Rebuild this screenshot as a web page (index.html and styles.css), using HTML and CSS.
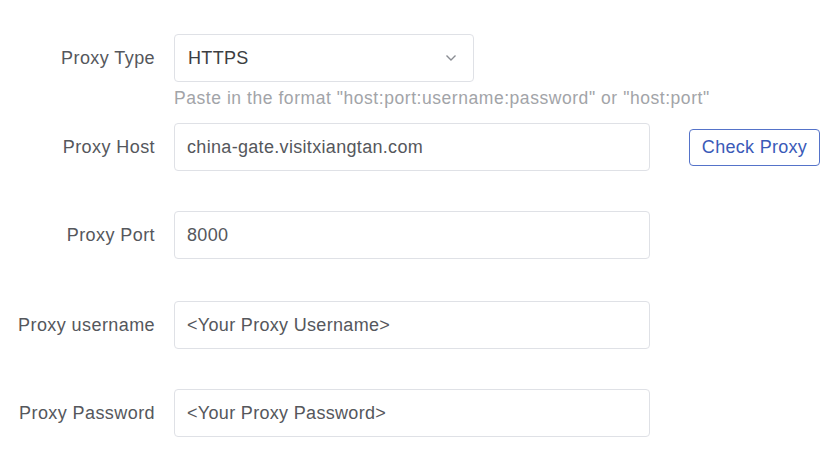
FILE: index.html
```html
<!DOCTYPE html>
<html>
<head>
<meta charset="utf-8">
<link rel="stylesheet" href="styles.css">
</head>
<body>
<form class="form">
  <div class="row">
    <label class="label">Proxy Type</label>
    <div class="control">
      <div class="select">
        <span class="value">HTTPS</span>
        <svg class="chevron" width="12" height="8" viewBox="0 0 12 8"><path d="M1.5 1.5 L6 6 L10.5 1.5" fill="none" stroke="#8a8d93" stroke-width="1.4"/></svg>
      </div>
      <div class="hint">Paste in the format "host:port:username:password" or "host:port"</div>
    </div>
  </div>
  <div class="row">
    <label class="label">Proxy Host</label>
    <div class="control inline">
      <div class="input wide">china-gate.visitxiangtan.com</div>
      <button type="button" class="btn">Check Proxy</button>
    </div>
  </div>
  <div class="row row-loose">
    <label class="label">Proxy Port</label>
    <div class="control"><div class="input wide">8000</div></div>
  </div>
  <div class="row">
    <label class="label">Proxy username</label>
    <div class="control"><div class="input wide">&lt;Your Proxy Username&gt;</div></div>
  </div>
  <div class="row">
    <label class="label">Proxy Password</label>
    <div class="control"><div class="input wide">&lt;Your Proxy Password&gt;</div></div>
  </div>
</form>
</body>
</html>
```
FILE: styles.css
```css
html, body {
  margin: 0;
  padding: 0;
  background: #ffffff;
  font-family: "Liberation Sans", Arial, sans-serif;
}
.form {
  padding-top: 34px;
  display: flex;
  flex-direction: column;
}
.row {
  display: flex;
  align-items: flex-start;
  margin-bottom: 40px;
}
.row:first-child {
  margin-bottom: 0;
}
.row.row-loose {
  margin-bottom: 42px;
}
.label {
  width: 155px;
  flex: none;
  text-align: right;
  font-size: 18px;
  letter-spacing: 0.42px;
  line-height: 48px;
  height: 48px;
  color: #55575c;
  margin-right: 19px;
  white-space: nowrap;
}
.control {
  display: flex;
  flex-direction: column;
}
.control.inline {
  flex-direction: row;
  align-items: center;
}
.select, .input {
  box-sizing: border-box;
  height: 48px;
  border: 1px solid #dfe1e6;
  border-radius: 4px;
  padding: 0 12px;
  font-size: 18px;
  letter-spacing: 0.32px;
  line-height: 46px;
  color: #55575c;
  background: #fff;
}
.select {
  width: 300px;
  display: flex;
  align-items: center;
  justify-content: space-between;
  padding-left: 13px;
  padding-right: 16px;
  color: #3c3e42;
}
.chevron {
  display: block;
}
.hint {
  height: 41px;
  box-sizing: border-box;
  padding-top: 4px;
  line-height: 24px;
  font-size: 17.5px;
  letter-spacing: 0.55px;
  color: #a2a4a8;
  white-space: nowrap;
}
.input.wide {
  width: 476px;
}
.btn {
  margin-left: 39px;
  width: 131px;
  height: 37px;
  box-sizing: border-box;
  border: 1px solid #5573c9;
  border-radius: 4px;
  background: #fff;
  color: #3a5ab8;
  font-family: "Liberation Sans", Arial, sans-serif;
  font-size: 18px;
  letter-spacing: 0.3px;
  padding: 0;
}
```
